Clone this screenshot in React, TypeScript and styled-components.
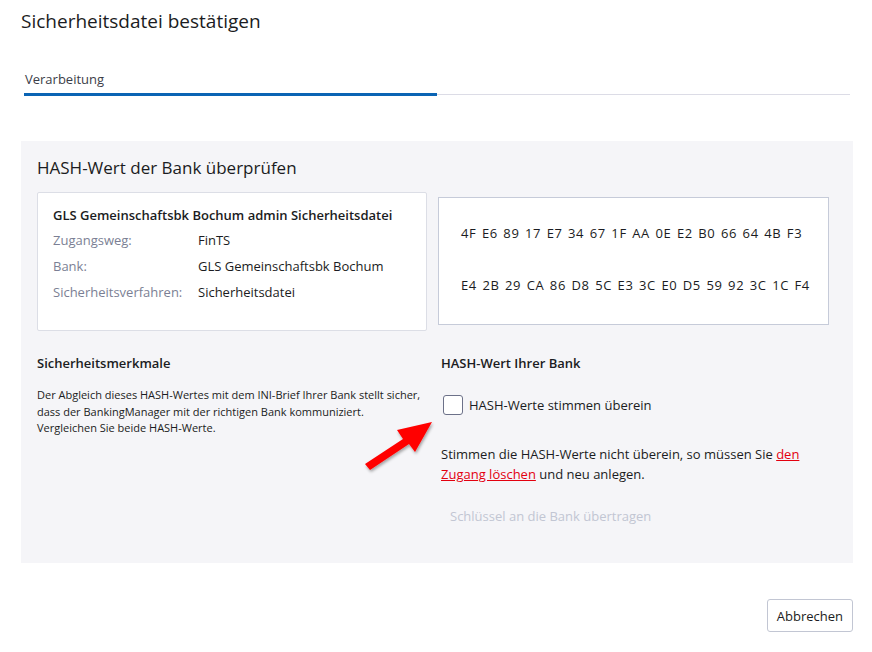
import React from "react";
import styled, { createGlobalStyle } from "styled-components";

const Global = createGlobalStyle`
  html, body { margin: 0; padding: 0; background: #fff; }
  body { font-family: "Open Sans", "Noto Sans", sans-serif; color: #1b1c22; }
  * { box-sizing: border-box; }
`;

const Page = styled.div`
  position: relative;
  width: 872px;
  height: 652px;
  padding: 0 19px 0 21px;
  display: flex;
  flex-direction: column;
`;

const Title = styled.h1`
  margin: 8px 0 0;
  font-size: 19px;
  font-weight: 400;
  line-height: 26px;
  color: #1b1c22;
`;

const Tabs = styled.div`
  margin-top: 36px;
  margin-left: 3px;
  margin-right: 3px;
  display: flex;
  flex-direction: column;
`;

const TabLabel = styled.div`
  font-size: 13px;
  color: #3b3d48;
  line-height: 18px;
  padding-left: 1px;
`;

const TabTrack = styled.div`
  margin-top: 5px;
  height: 3px;
  display: flex;
  align-items: center;
`;

const TabActive = styled.div`
  width: 413px;
  height: 3px;
  background: #0a64b4;
`;

const TabRest = styled.div`
  flex: 1;
  height: 1px;
  background: #dcdce6;
`;

const Panel = styled.section`
  margin-top: 45px;
  background: #f5f5f8;
  height: 422px;
  padding: 16px 16px 0 16px;
`;

const PanelTitle = styled.h2`
  margin: 0;
  font-size: 17px;
  font-weight: 400;
  line-height: 22px;
  color: #1b1c22;
`;

const CardRow = styled.div`
  margin-top: 13px;
  display: flex;
  align-items: flex-start;
  gap: 11px;
`;

const InfoCard = styled.div`
  width: 390px;
  height: 139px;
  background: #fff;
  border: 1px solid #dcdee6;
  border-radius: 2px;
  padding: 13px 15px;
`;

const InfoTitle = styled.div`
  font-size: 13px;
  font-weight: 600;
  line-height: 18px;
  margin-bottom: 7px;
`;

const InfoGrid = styled.div`
  display: grid;
  grid-template-columns: 145px 1fr;
  row-gap: 8px;
  font-size: 13px;
  line-height: 18px;
`;

const Label = styled.div`
  color: #7b7f94;
`;

const Value = styled.div`
  color: #1b1c22;
`;

const HashCard = styled.div`
  margin-top: 5px;
  width: 391px;
  height: 128px;
  background: #fff;
  border: 1px solid #c6cbd9;
  padding: 26px 0 0 22px;
  display: flex;
  flex-direction: column;
  gap: 34px;
`;

const HashLine = styled.div`
  font-size: 13px;
  line-height: 18px;
  letter-spacing: 0.6px;
  word-spacing: 1.6px;
  color: #1b1c22;
`;

const Columns = styled.div`
  margin-top: 23px;
  display: flex;
`;

const LeftCol = styled.div`
  width: 404px;
`;

const RightCol = styled.div`
  flex: 1;
  display: flex;
  flex-direction: column;
`;

const SubTitle = styled.div`
  font-size: 13px;
  font-weight: 600;
  line-height: 18px;
`;

const Paragraph = styled.p`
  margin: 15px 0 0;
  font-size: 11px;
  line-height: 16.5px;
  color: #1b1c22;
`;

const CheckRow = styled.label`
  margin-top: 23px;
  display: flex;
  align-items: center;
  gap: 6px;
  font-size: 13px;
  line-height: 20px;
  padding-left: 2px;
`;

const Box = styled.span`
  width: 20px;
  height: 20px;
  border: 1px solid #6c7189;
  border-radius: 3px;
  background: #fff;
`;

const Notice = styled.p`
  margin: 29px 0 0;
  font-size: 13px;
  line-height: 20px;
  width: 370px;
`;

const DangerLink = styled.a`
  color: #e3000f;
  text-decoration: underline;
`;

const GhostButton = styled.button`
  margin-top: 23px;
  align-self: flex-start;
  border: none;
  background: transparent;
  padding: 0 9px;
  font-family: inherit;
  font-size: 13px;
  line-height: 18px;
  color: #c2c6d3;
`;

const Footer = styled.div`
  margin-top: 36px;
  display: flex;
  justify-content: flex-end;
`;

const Button = styled.button`
  height: 33px;
  padding: 0 9px;
  background: #fff;
  border: 1px solid #c2c6d3;
  border-radius: 3px;
  font-family: inherit;
  font-size: 13px;
  color: #1b1c22;
`;

const ArrowOverlay = styled.svg`
  position: absolute;
  left: 355px;
  top: 410px;
  width: 90px;
  height: 70px;
  pointer-events: none;
`;

export default function App() {
  return (
    <>
      <Global />
      <Page>
        <Title>Sicherheitsdatei bestätigen</Title>
        <Tabs>
          <TabLabel>Verarbeitung</TabLabel>
          <TabTrack>
            <TabActive />
            <TabRest />
          </TabTrack>
        </Tabs>
        <Panel>
          <PanelTitle>HASH-Wert der Bank überprüfen</PanelTitle>
          <CardRow>
            <InfoCard>
              <InfoTitle>GLS Gemeinschaftsbk Bochum admin Sicherheitsdatei</InfoTitle>
              <InfoGrid>
                <Label>Zugangsweg:</Label>
                <Value>FinTS</Value>
                <Label>Bank:</Label>
                <Value>GLS Gemeinschaftsbk Bochum</Value>
                <Label>Sicherheitsverfahren:</Label>
                <Value>Sicherheitsdatei</Value>
              </InfoGrid>
            </InfoCard>
            <HashCard>
              <HashLine>4F E6 89 17 E7 34 67 1F AA 0E E2 B0 66 64 4B F3</HashLine>
              <HashLine>E4 2B 29 CA 86 D8 5C E3 3C E0 D5 59 92 3C 1C F4</HashLine>
            </HashCard>
          </CardRow>
          <Columns>
            <LeftCol>
              <SubTitle>Sicherheitsmerkmale</SubTitle>
              <Paragraph>
                Der Abgleich dieses HASH-Wertes mit dem INI-Brief Ihrer Bank stellt sicher,
                <br />
                dass der BankingManager mit der richtigen Bank kommuniziert.
                <br />
                Vergleichen Sie beide HASH-Werte.
              </Paragraph>
            </LeftCol>
            <RightCol>
              <SubTitle>HASH-Wert Ihrer Bank</SubTitle>
              <CheckRow>
                <Box />
                HASH-Werte stimmen überein
              </CheckRow>
              <Notice>
                Stimmen die HASH-Werte nicht überein, so müssen Sie{" "}
                <DangerLink href="#">den Zugang löschen</DangerLink> und neu anlegen.
              </Notice>
              <GhostButton disabled>Schlüssel an die Bank übertragen</GhostButton>
            </RightCol>
          </Columns>
        </Panel>
        <Footer>
          <Button>Abbrechen</Button>
        </Footer>
        <ArrowOverlay viewBox="0 0 90 70">
          <defs>
            <filter id="sh" x="-30%" y="-30%" width="160%" height="160%">
              <feDropShadow dx="1" dy="2" stdDeviation="1.5" floodColor="#000" floodOpacity="0.35" />
            </filter>
          </defs>
          <g filter="url(#sh)" fill="#ff0000" stroke="none">
            <path d="M10 54 L48 29 L42 20 L77 12 L60 42 L54 34 L15 60 Z" />
          </g>
        </ArrowOverlay>
      </Page>
    </>
  );
}
